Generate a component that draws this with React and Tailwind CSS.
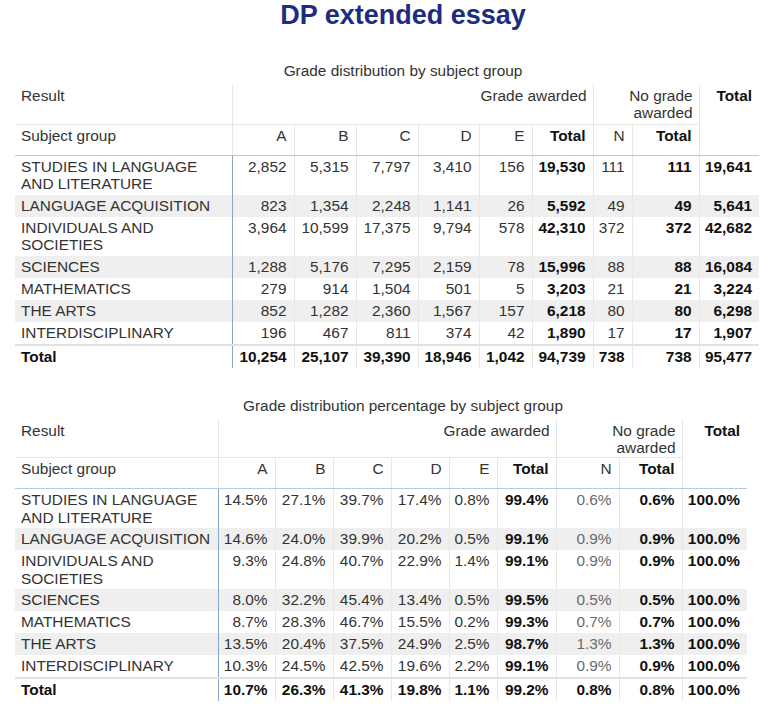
import React from "react";

const t1 = {
  caption: "Grade distribution by subject group",
  widths: [217, 62, 62, 62, 61, 53, 61, 39, 67, 60],
  greyN: false,
  h1: "h-[39px]",
  h2: "h-[31px]",
  rows: [
    [["STUDIES IN LANGUAGE", "AND LITERATURE"], "2,852", "5,315", "7,797", "3,410", "156", "19,530", "111", "111", "19,641"],
    [["LANGUAGE ACQUISITION"], "823", "1,354", "2,248", "1,141", "26", "5,592", "49", "49", "5,641"],
    [["INDIVIDUALS AND", "SOCIETIES"], "3,964", "10,599", "17,375", "9,794", "578", "42,310", "372", "372", "42,682"],
    [["SCIENCES"], "1,288", "5,176", "7,295", "2,159", "78", "15,996", "88", "88", "16,084"],
    [["MATHEMATICS"], "279", "914", "1,504", "501", "5", "3,203", "21", "21", "3,224"],
    [["THE ARTS"], "852", "1,282", "2,360", "1,567", "157", "6,218", "80", "80", "6,298"],
    [["INTERDISCIPLINARY"], "196", "467", "811", "374", "42", "1,890", "17", "17", "1,907"],
  ],
  total: ["10,254", "25,107", "39,390", "18,946", "1,042", "94,739", "738", "738", "95,477"],
};

const t2 = {
  caption: "Grade distribution percentage by subject group",
  widths: [203, 57, 58, 58, 58, 48, 59, 63, 63, 65],
  greyN: true,
  h1: "h-[38px]",
  h2: "h-[31px]",
  rows: [
    [["STUDIES IN LANGUAGE", "AND LITERATURE"], "14.5%", "27.1%", "39.7%", "17.4%", "0.8%", "99.4%", "0.6%", "0.6%", "100.0%"],
    [["LANGUAGE ACQUISITION"], "14.6%", "24.0%", "39.9%", "20.2%", "0.5%", "99.1%", "0.9%", "0.9%", "100.0%"],
    [["INDIVIDUALS AND", "SOCIETIES"], "9.3%", "24.8%", "40.7%", "22.9%", "1.4%", "99.1%", "0.9%", "0.9%", "100.0%"],
    [["SCIENCES"], "8.0%", "32.2%", "45.4%", "13.4%", "0.5%", "99.5%", "0.5%", "0.5%", "100.0%"],
    [["MATHEMATICS"], "8.7%", "28.3%", "46.7%", "15.5%", "0.2%", "99.3%", "0.7%", "0.7%", "100.0%"],
    [["THE ARTS"], "13.5%", "20.4%", "37.5%", "24.9%", "2.5%", "98.7%", "1.3%", "1.3%", "100.0%"],
    [["INTERDISCIPLINARY"], "10.3%", "24.5%", "42.5%", "19.6%", "2.2%", "99.1%", "0.9%", "0.9%", "100.0%"],
  ],
  total: ["10.7%", "26.3%", "41.3%", "19.8%", "1.1%", "99.2%", "0.8%", "0.8%", "100.0%"],
};

const boldCols = [5, 7, 8];

function DataTable({ d }) {
  const tableWidth = d.widths.reduce((a, b) => a + b, 0);
  return (
    <div className="flex flex-col">
      <div className="h-[18px] leading-[18px] pl-[36px] text-center text-[15.4px] text-[#333]">
        {d.caption}
      </div>
      <table
        className="ml-[15px] mt-[5px] table-fixed border-collapse text-[15.4px] text-[#333]"
        style={{ width: tableWidth }}
      >
        <colgroup>
          {d.widths.map((w, i) => (
            <col key={i} style={{ width: w }} />
          ))}
        </colgroup>
        <thead>
          <tr className={d.h1}>
            <th className="border-r border-b border-[#e6e6e6] px-[6px] pt-[2px] align-top text-left font-normal leading-[17px]">
              Result
            </th>
            <th colSpan={6} className="border-r border-b border-[#e6e6e6] pr-[6px] pt-[2px] align-top text-right font-normal leading-[17px]">
              Grade awarded
            </th>
            <th colSpan={2} className="border-r border-b border-[#e6e6e6] pr-[6px] pt-[2px] align-top text-right font-normal leading-[17px]">
              No grade
              <br />
              awarded
            </th>
            <th rowSpan={2} className="border-b border-b-[#b7cbe6] pr-[7px] pt-[2px] align-top text-right font-bold leading-[17px] text-[#111]">
              Total
            </th>
          </tr>
          <tr className={d.h2}>
            <th className="border-r border-[#e6e6e6] border-b border-b-[#b7cbe6] px-[6px] pt-[2px] align-top text-left font-normal leading-[18px]">
              Subject group
            </th>
            {["A", "B", "C", "D", "E", "Total", "N", "Total"].map((h, i) => (
              <th
                key={i}
                className={
                  "border-r border-[#e6e6e6] border-b border-b-[#b7cbe6] pr-[7px] pt-[2px] align-top text-right leading-[18px] " +
                  (h === "Total" ? "font-bold text-[#111]" : "font-normal")
                }
              >
                {h}
              </th>
            ))}
          </tr>
        </thead>
        <tbody>
          {d.rows.map((r, ri) => (
            <tr key={ri} className={ri % 2 === 1 ? "bg-[#efefef]" : "bg-white"}>
              <td className="border-r border-r-[#86a6d0] px-[6px] py-[2px] align-top leading-[17.5px] whitespace-nowrap">
                {r[0].map((l, li) => (
                  <div key={li}>{l}</div>
                ))}
              </td>
              {r.slice(1).map((v, ci) => (
                <td
                  key={ci}
                  className={
                    "pr-[7px] py-[2px] align-top text-right leading-[18px] whitespace-nowrap " +
                    (ci < 8 ? "border-r border-[#e8e8e8] " : "") +
                    (boldCols.includes(ci)
                      ? "font-bold text-[#111]"
                      : ci === 6 && d.greyN
                      ? "text-[#6a6a6a]"
                      : "")
                  }
                >
                  {v}
                </td>
              ))}
            </tr>
          ))}
          <tr className="bg-white">
            <td className="border-t-2 border-t-[#e2e2e2] border-r border-r-[#86a6d0] px-[6px] py-[2px] align-top font-bold leading-[18px] text-[#111]">
              Total
            </td>
            {d.total.map((v, ci) => (
              <td
                key={ci}
                className={
                  "border-t-2 border-t-[#e2e2e2] pr-[7px] py-[2px] align-top text-right font-bold leading-[18px] text-[#111] whitespace-nowrap " +
                  (ci < 8 ? "border-r border-r-[#e8e8e8]" : "")
                }
              >
                {v}
              </td>
            ))}
          </tr>
        </tbody>
      </table>
    </div>
  );
}

export default function App() {
  return (
    <div
      className="w-[770px] min-h-[713px] bg-white overflow-hidden"
      style={{ fontFamily: '"Liberation Sans", Arial, sans-serif' }}
    >
      <h1 className="pl-[36px] text-center text-[27px] font-bold leading-[31px] text-[#1e2c80]">
        DP extended essay
      </h1>
      <div className="mt-[31px]">
        <DataTable d={t1} />
      </div>
      <div className="mt-[29px]">
        <DataTable d={t2} />
      </div>
    </div>
  );
}
